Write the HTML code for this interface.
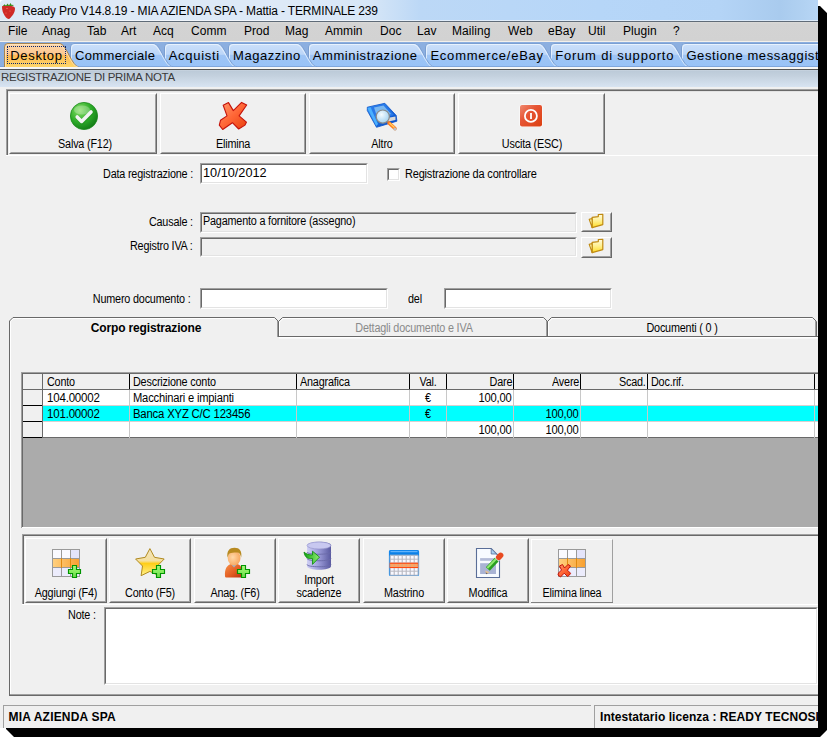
<!DOCTYPE html>
<html><head><meta charset="utf-8">
<style>
*{box-sizing:border-box;margin:0;padding:0}
html,body{width:833px;height:743px;background:#fff;overflow:hidden;font-family:"Liberation Sans",sans-serif;font-size:11px;color:#000}
.a{position:absolute}
#win{position:absolute;left:0;top:0;width:818px;height:728px;background:#f0f0f0;overflow:hidden}
#shR{position:absolute;left:818px;top:6px;width:9px;height:731px;background:#000;border-radius:0 7px 7px 0}
#shB{position:absolute;left:6px;top:728px;width:821px;height:9px;background:#000;border-radius:0 0 7px 7px}
#title{left:0;top:0;width:818px;height:21px;background:linear-gradient(90deg,#dde9f7 0,#dde9f7 300px,#d6e6f7 370px,#bcd8f6 420px,#b6d6f8 600px,#b4d4f6 720px,#a9cbee 780px,#b2d2f2 805px,#b8d6f6 818px)}
#title .t{left:22px;top:4.85px;font-size:12px;line-height:12px;letter-spacing:-0.15px;white-space:nowrap;color:#000}
#tline{left:0;top:21px;width:818px;height:1px;background:#5f6b78}
#menu{left:0;top:22px;width:818px;height:19px;background:linear-gradient(180deg,#dcdad8 0,#d3d3d3 2px,#d2d2d2 19px)}
#menu span{position:absolute;top:3.4px;font-size:12px;line-height:12px;letter-spacing:0.05px}
#mline{left:0;top:41px;width:818px;height:1px;background:#f4f0ea}
#tabs{left:0;top:42px;width:818px;height:25px;background:#8cafe0}
.tt{position:absolute;font-size:13px;line-height:13px;white-space:nowrap}
#tw{left:0;top:67px;width:818px;height:2px;background:#f6f6f6}
#hdrline{left:0;top:69px;width:818px;height:1px;background:#555}
#hdr{left:0;top:70px;width:818px;height:17px;background:linear-gradient(180deg,#c8d4e0 0px,#bdcbd9 1.5px,#c4d1de 6px,#d8e4f2 17px)}
#hdr .t{left:1px;top:2.27px;font-size:11.5px;line-height:11.5px;color:#3a3a3a;white-space:nowrap;letter-spacing:-0.3px}
.lbl{position:absolute;white-space:nowrap;font-size:11px;letter-spacing:-0.3px;line-height:13px}
.r{text-align:right}
.c{text-align:center}
.inp{position:absolute;background:#fff;border-top:1px solid #a0a0a0;border-left:1px solid #a0a0a0;border-right:1px solid #fff;border-bottom:1px solid #fff}
.inp:before{content:"";position:absolute;left:0;top:0;right:0;bottom:0;border-top:1px solid #696969;border-left:1px solid #696969;border-right:1px solid #e3e3e3;border-bottom:1px solid #e3e3e3}
.dis{background:#f0f0f0}
.btn{position:absolute;background:#f0f0f0;border-top:1px solid #fff;border-left:1px solid #fff;border-right:1px solid #696969;border-bottom:1px solid #696969}
.btn:before{content:"";position:absolute;left:0;top:0;right:0;bottom:0;border-top:1px solid #f0f0f0;border-left:1px solid #f0f0f0;border-right:1px solid #a0a0a0;border-bottom:1px solid #a0a0a0}
.btn .lbl{left:0;right:0;text-align:center}
</style></head><body>
<div id="win">
  <div class="a" id="title">
    <svg class="a" style="left:0;top:0" width="18" height="21" viewBox="0 0 18 21">
      <path d="M0,0 H4 A4,4 0 0 0 0,4 Z" fill="#fff"/>
      <path d="M2,6.5 C2,5.5 4,5.6 8,5.8 C12,5.6 15,6.5 15,8.5 C15,12.5 12,17 8.5,19 C7,19 5,16.5 3.5,13.5 C2.3,11 2,8.5 2,6.5 Z" fill="#d02a28"/>
      <path d="M8.5,19 C12,17 15,12.5 15,8.5 C14.5,13 12,16.5 9,18 Z" fill="#a81818"/>
      <path d="M3,6 L4.5,4.2 L6,5.8 L7.5,3.5 L9,5.5 L10.5,3 L12,5.5 L13,4.5 L13.5,6 Z" fill="#3c8a1a"/>
      <circle cx="7" cy="8.5" r="0.6" fill="#f0a080"/><circle cx="10" cy="11" r="0.5" fill="#f08070"/><circle cx="6" cy="13" r="0.5" fill="#f08070"/>
    </svg>
    <div class="a t">Ready Pro V14.8.19 - MIA AZIENDA SPA - Mattia - TERMINALE 239</div>
  </div>
  <div class="a" style="left:0;top:20px;width:818px;height:1px;background:rgba(255,255,255,0.55)"></div>
  <div class="a" id="tline"></div>
  <div class="a" id="menu">
    <span style="left:8px">File</span><span style="left:42px">Anag</span><span style="left:87px">Tab</span><span style="left:121px">Art</span><span style="left:153px">Acq</span><span style="left:191px">Comm</span><span style="left:244px">Prod</span><span style="left:285px">Mag</span><span style="left:325px">Ammin</span><span style="left:380px">Doc</span><span style="left:417px">Lav</span><span style="left:452px">Mailing</span><span style="left:508px">Web</span><span style="left:548px">eBay</span><span style="left:588px">Util</span><span style="left:623px">Plugin</span><span style="left:673px">?</span>
  </div>
  <div class="a" id="mline"></div>
  <div class="a" id="tabs">
<svg class="a" style="left:0;top:0" width="818" height="25" viewBox="0 0 818 25">
<defs><linearGradient id="gi" x1="0" y1="0" x2="0" y2="1"><stop offset="0" stop-color="#cce0fa"/><stop offset="0.46" stop-color="#bcd6f8"/><stop offset="0.5" stop-color="#9fc5f5"/><stop offset="1" stop-color="#98c2f7"/></linearGradient>
<linearGradient id="ga" x1="0" y1="0" x2="0" y2="1"><stop offset="0" stop-color="#fdd9aa"/><stop offset="0.46" stop-color="#fcc690"/><stop offset="0.5" stop-color="#ffbb55"/><stop offset="1" stop-color="#ffd66a"/></linearGradient></defs>
<path d="M681.5,25 L681.5,5 Q681.5,1.5 685,1.5 L890,1.5 C896,1.5 902,25 909,25 Z" fill="url(#gi)" stroke="none"/>
<path d="M681.5,25 L681.5,5 Q681.5,1.5 685,1.5 L890,1.5 C896,1.5 902,25 909,25" fill="none" stroke="#7b9fd2" stroke-width="1"/>
<path d="M682.5,25 L682.5,6 Q682.5,2.5 686,2.5 L889,2.5 C895,2.5 901,25 908,25" fill="none" stroke="#f4f9ff" stroke-width="1" opacity="0.7"/>
<path d="M550.5,25 L550.5,5 Q550.5,1.5 554,1.5 L671,1.5 C677,1.5 683,25 690,25 Z" fill="url(#gi)" stroke="none"/>
<path d="M550.5,25 L550.5,5 Q550.5,1.5 554,1.5 L671,1.5 C677,1.5 683,25 690,25" fill="none" stroke="#7b9fd2" stroke-width="1"/>
<path d="M551.5,25 L551.5,6 Q551.5,2.5 555,2.5 L670,2.5 C676,2.5 682,25 689,25" fill="none" stroke="#f4f9ff" stroke-width="1" opacity="0.7"/>
<path d="M425.5,25 L425.5,5 Q425.5,1.5 429,1.5 L540,1.5 C546,1.5 552,25 559,25 Z" fill="url(#gi)" stroke="none"/>
<path d="M425.5,25 L425.5,5 Q425.5,1.5 429,1.5 L540,1.5 C546,1.5 552,25 559,25" fill="none" stroke="#7b9fd2" stroke-width="1"/>
<path d="M426.5,25 L426.5,6 Q426.5,2.5 430,2.5 L539,2.5 C545,2.5 551,25 558,25" fill="none" stroke="#f4f9ff" stroke-width="1" opacity="0.7"/>
<path d="M308.5,25 L308.5,5 Q308.5,1.5 312,1.5 L415,1.5 C421,1.5 427,25 434,25 Z" fill="url(#gi)" stroke="none"/>
<path d="M308.5,25 L308.5,5 Q308.5,1.5 312,1.5 L415,1.5 C421,1.5 427,25 434,25" fill="none" stroke="#7b9fd2" stroke-width="1"/>
<path d="M309.5,25 L309.5,6 Q309.5,2.5 313,2.5 L414,2.5 C420,2.5 426,25 433,25" fill="none" stroke="#f4f9ff" stroke-width="1" opacity="0.7"/>
<path d="M228.5,25 L228.5,5 Q228.5,1.5 232,1.5 L298,1.5 C304,1.5 310,25 317,25 Z" fill="url(#gi)" stroke="none"/>
<path d="M228.5,25 L228.5,5 Q228.5,1.5 232,1.5 L298,1.5 C304,1.5 310,25 317,25" fill="none" stroke="#7b9fd2" stroke-width="1"/>
<path d="M229.5,25 L229.5,6 Q229.5,2.5 233,2.5 L297,2.5 C303,2.5 309,25 316,25" fill="none" stroke="#f4f9ff" stroke-width="1" opacity="0.7"/>
<path d="M164.5,25 L164.5,5 Q164.5,1.5 168,1.5 L218,1.5 C224,1.5 230,25 237,25 Z" fill="url(#gi)" stroke="none"/>
<path d="M164.5,25 L164.5,5 Q164.5,1.5 168,1.5 L218,1.5 C224,1.5 230,25 237,25" fill="none" stroke="#7b9fd2" stroke-width="1"/>
<path d="M165.5,25 L165.5,6 Q165.5,2.5 169,2.5 L217,2.5 C223,2.5 229,25 236,25" fill="none" stroke="#f4f9ff" stroke-width="1" opacity="0.7"/>
<path d="M70.5,25 L70.5,5 Q70.5,1.5 74,1.5 L154,1.5 C160,1.5 166,25 173,25 Z" fill="url(#gi)" stroke="none"/>
<path d="M70.5,25 L70.5,5 Q70.5,1.5 74,1.5 L154,1.5 C160,1.5 166,25 173,25" fill="none" stroke="#7b9fd2" stroke-width="1"/>
<path d="M71.5,25 L71.5,6 Q71.5,2.5 75,2.5 L153,2.5 C159,2.5 165,25 172,25" fill="none" stroke="#f4f9ff" stroke-width="1" opacity="0.7"/>
<path d="M4.5,25 L4.5,5 Q4.5,1.5 8,1.5 L60,1.5 C66,1.5 72,25 79,25 Z" fill="url(#ga)" stroke="none"/>
<path d="M4.5,25 L4.5,5 Q4.5,1.5 8,1.5 L60,1.5 C66,1.5 72,25 79,25" fill="none" stroke="#a8844e" stroke-width="1"/>
<path d="M5.5,25 L5.5,6 Q5.5,2.5 9,2.5 L59,2.5 C65,2.5 71,25 78,25" fill="none" stroke="#ffe8c8" stroke-width="1" opacity="0.7"/>

<rect x="0" y="24" width="4" height="1" fill="#7aa0d6"/><rect x="78" y="24" width="740" height="1" fill="#7aa0d6" opacity="0.8"/>
</svg>
<div style="position:absolute;left:7px;top:4px;width:59px;height:18px;border:1px dotted #0a2470"></div>
<div class="tt" style="left:10.2px;top:7.00px;letter-spacing:0.69px">Desktop</div>
<div class="tt" style="left:75.0px;top:7.00px;letter-spacing:0.35px">Commerciale</div>
<div class="tt" style="left:168.7px;top:7.00px;letter-spacing:0.71px">Acquisti</div>
<div class="tt" style="left:233.1px;top:7.00px;letter-spacing:0.52px">Magazzino</div>
<div class="tt" style="left:312.8px;top:7.00px;letter-spacing:0.58px">Amministrazione</div>
<div class="tt" style="left:430.4px;top:7.00px;letter-spacing:0.78px">Ecommerce/eBay</div>
<div class="tt" style="left:555.2px;top:7.00px;letter-spacing:0.8px">Forum di supporto</div>
<div class="tt" style="left:686.4px;top:7.00px;letter-spacing:0.6px">Gestione messaggisti</div>
  </div>
  <div class="a" id="tw"></div>
  <div class="a" id="hdrline"></div>
  <div class="a" id="hdr"><div class="a t">REGISTRAZIONE DI PRIMA NOTA</div></div>
  <!--BODY-->
<div style="position:absolute;left:6px;top:89px;width:812px;height:1px;background:#a0a0a0;"></div>
<div style="position:absolute;left:6px;top:90px;width:812px;height:1px;background:#696969;"></div>
<div style="position:absolute;left:6px;top:89px;width:1px;height:66px;background:#a0a0a0;"></div>
<div style="position:absolute;left:7px;top:90px;width:1px;height:65px;background:#696969;"></div>
<div style="position:absolute;left:8px;top:91px;width:810px;height:1px;background:#e3e3e3;"></div>
<div style="position:absolute;left:6px;top:155px;width:812px;height:1px;background:#fff;"></div>
<div style="position:absolute;left:9px;top:93px;width:148px;height:61px;background:#f0f0f0;border-style:solid;border-width:1px;border-color:#fff #696969 #696969 #fff"><div style="position:absolute;left:0;top:0;right:0;bottom:0;border-style:solid;border-width:1px;border-color:#f0f0f0 #a0a0a0 #a0a0a0 #f0f0f0"></div></div>
<div style="position:absolute;left:160px;top:93px;width:146px;height:61px;background:#f0f0f0;border-style:solid;border-width:1px;border-color:#fff #696969 #696969 #fff"><div style="position:absolute;left:0;top:0;right:0;bottom:0;border-style:solid;border-width:1px;border-color:#f0f0f0 #a0a0a0 #a0a0a0 #f0f0f0"></div></div>
<div style="position:absolute;left:309px;top:93px;width:146px;height:61px;background:#f0f0f0;border-style:solid;border-width:1px;border-color:#fff #696969 #696969 #fff"><div style="position:absolute;left:0;top:0;right:0;bottom:0;border-style:solid;border-width:1px;border-color:#f0f0f0 #a0a0a0 #a0a0a0 #f0f0f0"></div></div>
<div style="position:absolute;left:458px;top:93px;width:147px;height:61px;background:#f0f0f0;border-style:solid;border-width:1px;border-color:#fff #696969 #696969 #fff"><div style="position:absolute;left:0;top:0;right:0;bottom:0;border-style:solid;border-width:1px;border-color:#f0f0f0 #a0a0a0 #a0a0a0 #f0f0f0"></div></div>
<div style="position:absolute;top:137.84px;font-size:12px;line-height:12px;letter-spacing:-0.2px;white-space:nowrap;left:-15.299999999999997px;width:200px;text-align:center;transform-origin:50% 0;transform:scaleX(0.9);">Salva (F12)</div>
<div style="position:absolute;top:137.84px;font-size:12px;line-height:12px;letter-spacing:-0.2px;white-space:nowrap;left:133px;width:200px;text-align:center;transform-origin:50% 0;transform:scaleX(0.9);">Elimina</div>
<div style="position:absolute;top:137.84px;font-size:12px;line-height:12px;letter-spacing:-0.2px;white-space:nowrap;left:282px;width:200px;text-align:center;transform-origin:50% 0;transform:scaleX(0.9);">Altro</div>
<div style="position:absolute;top:137.84px;font-size:12px;line-height:12px;letter-spacing:-0.2px;white-space:nowrap;left:431.9px;width:200px;text-align:center;transform-origin:50% 0;transform:scaleX(0.9);">Uscita (ESC)</div>
<svg width="0" height="0" style="position:absolute"><defs>
<radialGradient id="gchk" cx="0.35" cy="0.3" r="0.75"><stop offset="0" stop-color="#8be06a"/><stop offset="0.55" stop-color="#2fae2a"/><stop offset="1" stop-color="#127a16"/></radialGradient>
<linearGradient id="gx" x1="0" y1="0" x2="1" y2="1"><stop offset="0" stop-color="#ff9a70"/><stop offset="0.5" stop-color="#ff6636"/><stop offset="1" stop-color="#e8400e"/></linearGradient>
<linearGradient id="gpow" x1="0" y1="0" x2="1" y2="1"><stop offset="0" stop-color="#f08a70"/><stop offset="0.4" stop-color="#e65535"/><stop offset="1" stop-color="#dc4010"/></linearGradient>
<linearGradient id="gplus" x1="0" y1="0" x2="0" y2="1"><stop offset="0" stop-color="#a8f880"/><stop offset="0.5" stop-color="#88ee60"/><stop offset="1" stop-color="#6ad848"/></linearGradient>
<linearGradient id="gstar" x1="0" y1="0" x2="0" y2="1"><stop offset="0" stop-color="#f2e4bc"/><stop offset="0.45" stop-color="#f5e0a0"/><stop offset="0.55" stop-color="#ffce18"/><stop offset="1" stop-color="#fff290"/></linearGradient>
<linearGradient id="gdb" x1="0" y1="0" x2="1" y2="0"><stop offset="0" stop-color="#d0d0f4"/><stop offset="0.45" stop-color="#a0a0dc"/><stop offset="1" stop-color="#5a5aa0"/></linearGradient>
<linearGradient id="garr" x1="0" y1="0" x2="1" y2="0"><stop offset="0" stop-color="#10a010"/><stop offset="1" stop-color="#90f070"/></linearGradient>
<linearGradient id="gor" x1="0" y1="0" x2="1" y2="0"><stop offset="0" stop-color="#ffd080"/><stop offset="1" stop-color="#f8a030"/></linearGradient>
<linearGradient id="gfold" x1="0" y1="0" x2="0" y2="1"><stop offset="0" stop-color="#fffbe0"/><stop offset="0.5" stop-color="#fff090"/><stop offset="1" stop-color="#ffdc20"/></linearGradient>
<linearGradient id="gbody" x1="0" y1="0" x2="1" y2="1"><stop offset="0" stop-color="#f89048"/><stop offset="0.6" stop-color="#e05a20"/><stop offset="1" stop-color="#b83010"/></linearGradient><radialGradient id="gface" cx="0.4" cy="0.45" r="0.6"><stop offset="0" stop-color="#ffd8a8"/><stop offset="1" stop-color="#f8a860"/></radialGradient>
<linearGradient id="gbook" x1="0" y1="0" x2="1" y2="1"><stop offset="0" stop-color="#3aa0ff"/><stop offset="1" stop-color="#0040c0"/></linearGradient>
<radialGradient id="glens" cx="0.4" cy="0.35" r="0.7"><stop offset="0" stop-color="#f4fbff"/><stop offset="1" stop-color="#9ed0f0"/></radialGradient>
</defs></svg>
<svg style="position:absolute;left:70px;top:101.8px" width="28" height="28" viewBox="0 0 28 28"><circle cx="14" cy="14" r="13.6" fill="url(#gchk)" stroke="#1b8a1b" stroke-width="0.8"/><ellipse cx="12" cy="8" rx="8" ry="4.5" fill="#fff" opacity="0.25"/><path d="M7.2,15 L11.6,19.4 L21,10" fill="none" stroke="#1a7a1a" stroke-width="4.6" stroke-linecap="round" stroke-linejoin="round" opacity="0.35" transform="translate(0.4,0.6)"/><path d="M7.2,15 L11.6,19.4 L21,10" fill="none" stroke="#f4f4f4" stroke-width="3.6" stroke-linecap="round" stroke-linejoin="round"/></svg>
<svg style="position:absolute;left:213px;top:98px" width="40" height="36" viewBox="0 0 40 36"><polygon points="10.2,7.3 15.5,4.6 20.3,12.6 28.6,4.4 33.7,7 26.1,17.9 33.4,24.2 32,27.1 25.7,31 19.4,24.7 9.7,31.5 6.3,27.1 7.5,22.3 14,17.9" fill="url(#gx)" stroke="#c4120a" stroke-width="1.1" stroke-linejoin="round"/></svg>
<svg style="position:absolute;left:362px;top:98px" width="40" height="36" viewBox="0 0 40 36"><polygon points="5.3,9.2 22.8,5.3 34.2,17.4 34.9,23.2 14.5,29.3 5.3,12.6" fill="url(#gbook)" stroke="#0a50c8" stroke-width="0.8"/><polygon points="9,9 22,6.2 32,17 14,22.5" fill="#2a78e8"/><polygon points="12,9.5 21.5,7.5 29,16 15.5,20" fill="#7ab8f0"/><polygon points="5.5,10 8.5,9.5 16,26 14.2,28" fill="#4ab0ff"/><polygon points="25,20 33.5,18.5 33.5,22 24,24" fill="#d8d8d8"/><line x1="27" y1="25" x2="33" y2="30.5" stroke="#ff7a20" stroke-width="3.6" stroke-linecap="round"/><line x1="27.5" y1="25" x2="32.5" y2="29.5" stroke="#ffd060" stroke-width="1.4"/><circle cx="33" cy="31" r="1.6" fill="#c0c0c0"/><circle cx="20.8" cy="18.6" r="6.6" fill="url(#glens)" stroke="#8a8a8a" stroke-width="1.2"/></svg>
<svg style="position:absolute;left:511px;top:98px" width="40" height="36" viewBox="0 0 40 36"><rect x="8.5" y="6.5" width="23" height="22.5" rx="2.5" fill="#fff" opacity="0.9"/><rect x="9" y="7" width="22" height="21.6" rx="2" fill="url(#gpow)"/><circle cx="19.9" cy="17.9" r="6" fill="none" stroke="#fff" stroke-width="1.8"/><rect x="19.1" y="15" width="1.8" height="6" fill="#fff"/></svg>
<div style="position:absolute;top:167.84px;font-size:12px;line-height:12px;letter-spacing:-0.2px;white-space:nowrap;right:625px;transform-origin:100% 0;transform:scaleX(0.9);">Data registrazione :</div>
<div style="position:absolute;left:200px;top:163px;width:168px;height:21px;background:#fff;border-style:solid;border-width:1px;border-color:#a0a0a0 #fff #fff #a0a0a0"><div style="position:absolute;left:0;top:0;right:0;bottom:0;border-style:solid;border-width:1px;border-color:#696969 #e3e3e3 #e3e3e3 #696969"></div></div>
<div style="position:absolute;top:166.84px;font-size:12px;line-height:12px;letter-spacing:0px;white-space:nowrap;left:203px;transform-origin:0 0;transform:scaleX(1.06);">10/10/2012</div>
<div style="position:absolute;left:387px;top:168px;width:13px;height:13px;background:#fff;border-style:solid;border-width:1px;border-color:#a0a0a0 #fff #fff #a0a0a0"><div style="position:absolute;left:0;top:0;right:0;bottom:0;border-style:solid;border-width:1px;border-color:#696969 #e3e3e3 #e3e3e3 #696969"></div></div>
<div style="position:absolute;top:167.84px;font-size:12px;line-height:12px;letter-spacing:-0.2px;white-space:nowrap;left:405px;transform-origin:0 0;transform:scaleX(0.915);">Registrazione da controllare</div>
<div style="position:absolute;top:215.84px;font-size:12px;line-height:12px;letter-spacing:-0.2px;white-space:nowrap;right:625px;transform-origin:100% 0;transform:scaleX(0.9);">Causale :</div>
<div style="position:absolute;left:200px;top:212px;width:377px;height:21px;background:#f0f0f0;border-style:solid;border-width:1px;border-color:#a0a0a0 #fff #fff #a0a0a0"><div style="position:absolute;left:0;top:0;right:0;bottom:0;border-style:solid;border-width:1px;border-color:#696969 #e3e3e3 #e3e3e3 #696969"></div></div>
<div style="position:absolute;top:214.84px;font-size:12px;line-height:12px;letter-spacing:-0.2px;white-space:nowrap;left:203px;transform-origin:0 0;transform:scaleX(0.9);">Pagamento a fornitore (assegno)</div>
<div style="position:absolute;left:581px;top:212px;width:31px;height:20px;background:#f0f0f0;border-style:solid;border-width:1px;border-color:#fff #696969 #696969 #fff"><div style="position:absolute;left:0;top:0;right:0;bottom:0;border-style:solid;border-width:1px;border-color:#f0f0f0 #a0a0a0 #a0a0a0 #f0f0f0"></div></div>
<div style="position:absolute;top:239.84px;font-size:12px;line-height:12px;letter-spacing:-0.2px;white-space:nowrap;right:625px;transform-origin:100% 0;transform:scaleX(0.9);">Registro IVA :</div>
<div style="position:absolute;left:200px;top:237px;width:377px;height:20px;background:#f0f0f0;border-style:solid;border-width:1px;border-color:#a0a0a0 #fff #fff #a0a0a0"><div style="position:absolute;left:0;top:0;right:0;bottom:0;border-style:solid;border-width:1px;border-color:#696969 #e3e3e3 #e3e3e3 #696969"></div></div>
<div style="position:absolute;left:581px;top:237px;width:31px;height:21px;background:#f0f0f0;border-style:solid;border-width:1px;border-color:#fff #696969 #696969 #fff"><div style="position:absolute;left:0;top:0;right:0;bottom:0;border-style:solid;border-width:1px;border-color:#f0f0f0 #a0a0a0 #a0a0a0 #f0f0f0"></div></div>
<svg style="position:absolute;left:585px;top:211px" width="24" height="22" viewBox="0 0 24 22"><path d="M7.1,16.6 L7.1,6.4 L13.3,5.6 L13.3,3.5 L17.8,3.3 L17.8,13.6 Z" fill="url(#gfold)" stroke="#c08a10" stroke-width="1.2" stroke-linejoin="round"/><path d="M4.2,8.3 L7.1,7.6 L7.1,16.6 Z" fill="#fff6b0" stroke="#c08a10" stroke-width="1.1" stroke-linejoin="round"/></svg>
<svg style="position:absolute;left:585px;top:236px" width="24" height="22" viewBox="0 0 24 22"><path d="M7.1,16.6 L7.1,6.4 L13.3,5.6 L13.3,3.5 L17.8,3.3 L17.8,13.6 Z" fill="url(#gfold)" stroke="#c08a10" stroke-width="1.2" stroke-linejoin="round"/><path d="M4.2,8.3 L7.1,7.6 L7.1,16.6 Z" fill="#fff6b0" stroke="#c08a10" stroke-width="1.1" stroke-linejoin="round"/></svg>
<div style="position:absolute;top:292.84px;font-size:12px;line-height:12px;letter-spacing:-0.2px;white-space:nowrap;right:628px;transform-origin:100% 0;transform:scaleX(0.9);">Numero documento :</div>
<div style="position:absolute;left:200px;top:288px;width:188px;height:21px;background:#fff;border-style:solid;border-width:1px;border-color:#a0a0a0 #fff #fff #a0a0a0"><div style="position:absolute;left:0;top:0;right:0;bottom:0;border-style:solid;border-width:1px;border-color:#696969 #e3e3e3 #e3e3e3 #696969"></div></div>
<div style="position:absolute;top:292.84px;font-size:12px;line-height:12px;letter-spacing:-0.2px;white-space:nowrap;left:408px;transform-origin:0 0;transform:scaleX(0.9);">del</div>
<div style="position:absolute;left:444px;top:288px;width:168px;height:21px;background:#fff;border-style:solid;border-width:1px;border-color:#a0a0a0 #fff #fff #a0a0a0"><div style="position:absolute;left:0;top:0;right:0;bottom:0;border-style:solid;border-width:1px;border-color:#696969 #e3e3e3 #e3e3e3 #696969"></div></div>
<svg style="position:absolute;left:0;top:300px" width="818" height="400" viewBox="0 300 818 400"><path d="M9.5,696 L9.5,321 L13,317.5 L274.5,317.5 L278.5,321.5 L278.5,336" fill="none" stroke="#696969"/><path d="M10.5,695 L10.5,321.5 L13.5,318.5 L274,318.5" fill="none" stroke="#fff"/><path d="M277.5,321 L277.5,337" fill="none" stroke="#a0a0a0"/><path d="M278.5,336.5 L278.5,321.5 L282.5,317.5 L543.5,317.5 L547.5,321.5 L547.5,336.5" fill="none" stroke="#696969"/><path d="M279.5,336 L279.5,322 L283,318.5 L543,318.5" fill="none" stroke="#fff"/><path d="M546.5,321 L546.5,336" fill="none" stroke="#a0a0a0"/><path d="M547.5,336.5 L547.5,321.5 L551.5,317.5 L812.5,317.5 L816.5,321.5 L816.5,336.5" fill="none" stroke="#696969"/><path d="M548.5,336 L548.5,322 L552,318.5 L812,318.5" fill="none" stroke="#fff"/><path d="M815.5,321 L815.5,336" fill="none" stroke="#a0a0a0"/><path d="M278,336.5 L818,336.5" stroke="#696969"/><path d="M279,337.5 L818,337.5" stroke="#fff"/><path d="M279,338.5 L818,338.5" stroke="#f8f8f8"/><path d="M10,694.5 L818,694.5" stroke="#a0a0a0"/><path d="M9,695.5 L818,695.5" stroke="#696969"/></svg>
<div style="position:absolute;top:321.84px;font-size:12px;line-height:12px;letter-spacing:-0.15px;white-space:nowrap;font-weight:bold;left:46px;width:200px;text-align:center;transform-origin:50% 0;">Corpo registrazione</div>
<div style="position:absolute;top:321.84px;font-size:12px;line-height:12px;letter-spacing:-0.2px;white-space:nowrap;color:#8a8a8a;left:314px;width:200px;text-align:center;transform-origin:50% 0;transform:scaleX(0.9);">Dettagli documento e IVA</div>
<div style="position:absolute;top:321.84px;font-size:12px;line-height:12px;letter-spacing:-0.2px;white-space:nowrap;left:582px;width:200px;text-align:center;transform-origin:50% 0;transform:scaleX(0.9);">Documenti ( 0 )</div>
<div style="position:absolute;left:21px;top:372px;width:797px;height:1px;background:#a0a0a0;"></div>
<div style="position:absolute;left:22px;top:373px;width:796px;height:1px;background:#696969;"></div>
<div style="position:absolute;left:21px;top:372px;width:1px;height:156px;background:#a0a0a0;"></div>
<div style="position:absolute;left:22px;top:373px;width:1px;height:155px;background:#696969;"></div>
<div style="position:absolute;left:23px;top:374px;width:795px;height:16px;background:#f0f0f0;"></div>
<div style="position:absolute;left:23px;top:390px;width:19px;height:48px;background:#f0f0f0;"></div>
<div style="position:absolute;left:43px;top:390px;width:775px;height:48px;background:#fff;"></div>
<div style="position:absolute;left:43px;top:406px;width:775px;height:15px;background:#00ffff;"></div>
<div style="position:absolute;left:23px;top:438px;width:795px;height:89px;background:#ababab;"></div>
<div style="position:absolute;left:23px;top:389px;width:795px;height:1px;background:#696969;"></div>
<div style="position:absolute;left:43px;top:405px;width:775px;height:1px;background:#d8d0d0;"></div>
<div style="position:absolute;left:43px;top:421px;width:775px;height:1px;background:#d8d0d0;"></div>
<div style="position:absolute;left:43px;top:437px;width:775px;height:1px;background:#696969;"></div>
<div style="position:absolute;left:23px;top:405px;width:19px;height:1px;background:#000;"></div>
<div style="position:absolute;left:23px;top:421px;width:19px;height:1px;background:#000;"></div>
<div style="position:absolute;left:23px;top:437px;width:19px;height:1px;background:#000;"></div>
<div style="position:absolute;left:42px;top:374px;width:1px;height:64px;background:#696969;"></div>
<div style="position:absolute;left:129px;top:374px;width:1px;height:15px;background:#000;"></div>
<div style="position:absolute;left:129px;top:390px;width:1px;height:48px;background:#c8c8c8;"></div>
<div style="position:absolute;left:296px;top:374px;width:1px;height:15px;background:#000;"></div>
<div style="position:absolute;left:296px;top:390px;width:1px;height:48px;background:#c8c8c8;"></div>
<div style="position:absolute;left:409px;top:374px;width:1px;height:15px;background:#000;"></div>
<div style="position:absolute;left:409px;top:390px;width:1px;height:48px;background:#c8c8c8;"></div>
<div style="position:absolute;left:446px;top:374px;width:1px;height:15px;background:#000;"></div>
<div style="position:absolute;left:446px;top:390px;width:1px;height:48px;background:#c8c8c8;"></div>
<div style="position:absolute;left:513px;top:374px;width:1px;height:15px;background:#000;"></div>
<div style="position:absolute;left:513px;top:390px;width:1px;height:48px;background:#c8c8c8;"></div>
<div style="position:absolute;left:580px;top:374px;width:1px;height:15px;background:#000;"></div>
<div style="position:absolute;left:580px;top:390px;width:1px;height:48px;background:#c8c8c8;"></div>
<div style="position:absolute;left:647px;top:374px;width:1px;height:15px;background:#000;"></div>
<div style="position:absolute;left:647px;top:390px;width:1px;height:48px;background:#c8c8c8;"></div>
<div style="position:absolute;left:814px;top:374px;width:1px;height:15px;background:#000;"></div>
<div style="position:absolute;left:814px;top:390px;width:1px;height:48px;background:#c8c8c8;"></div>
<div style="position:absolute;top:375.84px;font-size:12px;line-height:12px;letter-spacing:-0.2px;white-space:nowrap;left:47px;transform-origin:0 0;transform:scaleX(0.9);">Conto</div>
<div style="position:absolute;top:375.84px;font-size:12px;line-height:12px;letter-spacing:-0.2px;white-space:nowrap;left:133px;transform-origin:0 0;transform:scaleX(0.9);">Descrizione conto</div>
<div style="position:absolute;top:375.84px;font-size:12px;line-height:12px;letter-spacing:-0.2px;white-space:nowrap;left:300px;transform-origin:0 0;transform:scaleX(0.9);">Anagrafica</div>
<div style="position:absolute;top:375.84px;font-size:12px;line-height:12px;letter-spacing:-0.2px;white-space:nowrap;left:328px;width:200px;text-align:center;transform-origin:50% 0;transform:scaleX(0.9);">Val.</div>
<div style="position:absolute;top:375.84px;font-size:12px;line-height:12px;letter-spacing:-0.2px;white-space:nowrap;right:306px;transform-origin:100% 0;transform:scaleX(0.9);">Dare</div>
<div style="position:absolute;top:375.84px;font-size:12px;line-height:12px;letter-spacing:-0.2px;white-space:nowrap;right:239px;transform-origin:100% 0;transform:scaleX(0.9);">Avere</div>
<div style="position:absolute;top:375.84px;font-size:12px;line-height:12px;letter-spacing:-0.2px;white-space:nowrap;right:172px;transform-origin:100% 0;transform:scaleX(0.9);">Scad.</div>
<div style="position:absolute;top:375.84px;font-size:12px;line-height:12px;letter-spacing:-0.2px;white-space:nowrap;left:651px;transform-origin:0 0;transform:scaleX(0.9);">Doc.rif.</div>
<div style="position:absolute;top:391.84px;font-size:12px;line-height:12px;letter-spacing:-0.2px;white-space:nowrap;left:47px;transform-origin:0 0;transform:scaleX(0.96);">104.00002</div>
<div style="position:absolute;top:391.84px;font-size:12px;line-height:12px;letter-spacing:-0.2px;white-space:nowrap;left:133px;transform-origin:0 0;transform:scaleX(0.93);">Macchinari e impianti</div>
<div style="position:absolute;top:391.84px;font-size:12px;line-height:12px;letter-spacing:-0.2px;white-space:nowrap;left:328px;width:200px;text-align:center;transform-origin:50% 0;transform:scaleX(0.9);">&euro;</div>
<div style="position:absolute;top:391.84px;font-size:12px;line-height:12px;letter-spacing:-0.2px;white-space:nowrap;right:306px;transform-origin:100% 0;transform:scaleX(0.93);">100,00</div>
<div style="position:absolute;top:407.84px;font-size:12px;line-height:12px;letter-spacing:-0.2px;white-space:nowrap;left:47px;transform-origin:0 0;transform:scaleX(0.96);">101.00002</div>
<div style="position:absolute;top:407.84px;font-size:12px;line-height:12px;letter-spacing:-0.2px;white-space:nowrap;left:133px;transform-origin:0 0;transform:scaleX(0.945);">Banca XYZ C/C 123456</div>
<div style="position:absolute;top:407.84px;font-size:12px;line-height:12px;letter-spacing:-0.2px;white-space:nowrap;left:328px;width:200px;text-align:center;transform-origin:50% 0;transform:scaleX(0.9);">&euro;</div>
<div style="position:absolute;top:407.84px;font-size:12px;line-height:12px;letter-spacing:-0.2px;white-space:nowrap;right:239px;transform-origin:100% 0;transform:scaleX(0.93);">100,00</div>
<div style="position:absolute;top:423.84px;font-size:12px;line-height:12px;letter-spacing:-0.2px;white-space:nowrap;right:306px;transform-origin:100% 0;transform:scaleX(0.93);">100,00</div>
<div style="position:absolute;top:423.84px;font-size:12px;line-height:12px;letter-spacing:-0.2px;white-space:nowrap;right:239px;transform-origin:100% 0;transform:scaleX(0.93);">100,00</div>
<div style="position:absolute;left:22px;top:527px;width:796px;height:1px;background:#fff;"></div>
<div style="position:absolute;left:22px;top:534px;width:796px;height:1px;background:#a0a0a0;"></div>
<div style="position:absolute;left:23px;top:535px;width:795px;height:1px;background:#696969;"></div>
<div style="position:absolute;left:22px;top:534px;width:1px;height:71px;background:#a0a0a0;"></div>
<div style="position:absolute;left:23px;top:535px;width:1px;height:70px;background:#696969;"></div>
<div style="position:absolute;left:22px;top:604px;width:796px;height:1px;background:#fff;"></div>
<div style="position:absolute;left:25px;top:538px;width:82px;height:65px;background:#f0f0f0;border-style:solid;border-width:1px;border-color:#fff #696969 #696969 #fff"><div style="position:absolute;left:0;top:0;right:0;bottom:0;border-style:solid;border-width:1px;border-color:#f0f0f0 #a0a0a0 #a0a0a0 #f0f0f0"></div></div>
<div style="position:absolute;top:586.84px;font-size:12px;line-height:12px;letter-spacing:-0.2px;white-space:nowrap;left:-34px;width:200px;text-align:center;transform-origin:50% 0;transform:scaleX(0.9);">Aggiungi (F4)</div>
<div style="position:absolute;left:109px;top:538px;width:82px;height:65px;background:#f0f0f0;border-style:solid;border-width:1px;border-color:#fff #696969 #696969 #fff"><div style="position:absolute;left:0;top:0;right:0;bottom:0;border-style:solid;border-width:1px;border-color:#f0f0f0 #a0a0a0 #a0a0a0 #f0f0f0"></div></div>
<div style="position:absolute;top:586.84px;font-size:12px;line-height:12px;letter-spacing:-0.2px;white-space:nowrap;left:50px;width:200px;text-align:center;transform-origin:50% 0;transform:scaleX(0.9);">Conto (F5)</div>
<div style="position:absolute;left:194px;top:538px;width:82px;height:65px;background:#f0f0f0;border-style:solid;border-width:1px;border-color:#fff #696969 #696969 #fff"><div style="position:absolute;left:0;top:0;right:0;bottom:0;border-style:solid;border-width:1px;border-color:#f0f0f0 #a0a0a0 #a0a0a0 #f0f0f0"></div></div>
<div style="position:absolute;top:586.84px;font-size:12px;line-height:12px;letter-spacing:-0.2px;white-space:nowrap;left:135px;width:200px;text-align:center;transform-origin:50% 0;transform:scaleX(0.9);">Anag. (F6)</div>
<div style="position:absolute;left:278px;top:538px;width:82px;height:65px;background:#f0f0f0;border-style:solid;border-width:1px;border-color:#fff #696969 #696969 #fff"><div style="position:absolute;left:0;top:0;right:0;bottom:0;border-style:solid;border-width:1px;border-color:#f0f0f0 #a0a0a0 #a0a0a0 #f0f0f0"></div></div>
<div style="position:absolute;left:363px;top:538px;width:82px;height:65px;background:#f0f0f0;border-style:solid;border-width:1px;border-color:#fff #696969 #696969 #fff"><div style="position:absolute;left:0;top:0;right:0;bottom:0;border-style:solid;border-width:1px;border-color:#f0f0f0 #a0a0a0 #a0a0a0 #f0f0f0"></div></div>
<div style="position:absolute;top:586.84px;font-size:12px;line-height:12px;letter-spacing:-0.2px;white-space:nowrap;left:304px;width:200px;text-align:center;transform-origin:50% 0;transform:scaleX(0.9);">Mastrino</div>
<div style="position:absolute;left:447px;top:538px;width:82px;height:65px;background:#f0f0f0;border-style:solid;border-width:1px;border-color:#fff #696969 #696969 #fff"><div style="position:absolute;left:0;top:0;right:0;bottom:0;border-style:solid;border-width:1px;border-color:#f0f0f0 #a0a0a0 #a0a0a0 #f0f0f0"></div></div>
<div style="position:absolute;top:586.84px;font-size:12px;line-height:12px;letter-spacing:-0.2px;white-space:nowrap;left:388px;width:200px;text-align:center;transform-origin:50% 0;transform:scaleX(0.9);">Modifica</div>
<div style="position:absolute;left:531px;top:539px;width:82px;height:64px;background:#f0f0f0;border-style:solid;border-width:1px;border-color:#fff #a0a0a0 #a0a0a0 #fff"><div style="position:absolute;left:0;top:0;right:0;bottom:0;border-style:solid;border-width:1px;border-color:#f0f0f0 #f0f0f0 #f0f0f0 #f0f0f0"></div></div>
<div style="position:absolute;left:531px;top:602px;width:82px;height:1px;background:#808080;"></div>
<div style="position:absolute;top:586.84px;font-size:12px;line-height:12px;letter-spacing:-0.2px;white-space:nowrap;left:472px;width:200px;text-align:center;transform-origin:50% 0;transform:scaleX(0.9);">Elimina linea</div>
<div style="position:absolute;top:573.84px;font-size:12px;line-height:12px;letter-spacing:-0.2px;white-space:nowrap;left:219px;width:200px;text-align:center;transform-origin:50% 0;transform:scaleX(0.9);">Import</div>
<div style="position:absolute;top:586.84px;font-size:12px;line-height:12px;letter-spacing:-0.2px;white-space:nowrap;left:219px;width:200px;text-align:center;transform-origin:50% 0;transform:scaleX(0.9);">scadenze</div>
<svg style="position:absolute;left:52px;top:549px" width="30" height="30" viewBox="0 0 30 30"><rect x="0.5" y="0.5" width="27" height="27" fill="#fff" stroke="#9a9a9a"/><rect x="1" y="1" width="26" height="8.5" fill="#fafaff"/><rect x="19" y="1" width="8" height="8.5" fill="#e4e4fa"/><rect x="1" y="9.5" width="26" height="9" fill="url(#gor)"/><rect x="1" y="18.5" width="26" height="8.5" fill="#ececfc"/><path d="M9.5,0 V28 M18.5,0 V28 M0,9.5 H28 M0,18.5 H28" stroke="#9a9a9a" stroke-width="1"/><path d="M9.5,9 V19 M18.5,9 V19" stroke="#e08a10" stroke-width="1"/><path d="M20.5,16.5 h4.0 v4.0 h4.0 v4.0 h-4.0 v4.0 h-4.0 v-4.0 h-4.0 v-4.0 h4.0 Z" fill="url(#gplus)" stroke="#009400" stroke-width="1.15" stroke-linejoin="miter"/></svg>
<svg style="position:absolute;left:130px;top:544px" width="40" height="40" viewBox="0 0 40 40"><polygon points="19.9,4.6 24.5,13.3 34.2,15.0 27.3,22.0 28.7,31.7 19.9,27.4 11.1,31.7 12.5,22.0 5.6,15.0 15.3,13.3" fill="url(#gstar)" stroke="#b08a20" stroke-width="1" stroke-linejoin="round"/><path d="M26.5,21.5 h4.0 v4.0 h4.0 v4.0 h-4.0 v4.0 h-4.0 v-4.0 h-4.0 v-4.0 h4.0 Z" fill="url(#gplus)" stroke="#009400" stroke-width="1.15" stroke-linejoin="miter"/></svg>
<svg style="position:absolute;left:215px;top:544px" width="40" height="40" viewBox="0 0 40 40"><path d="M10,32 C9.5,25 12,20.5 17,20 L22,20 C26.5,20.5 27.5,25 26.5,33.5 L12,33.5 C10.5,33.5 10,33 10,32 Z" fill="url(#gbody)"/><path d="M16,20.3 L19,23.5 L22,20.3 Z" fill="#9ab0c8"/><ellipse cx="19.1" cy="14" rx="6.4" ry="7.4" fill="url(#gface)"/><path d="M12.5,13.5 C11.5,7 14.5,3.8 19.5,3.8 C24.5,3.8 27.2,7 26.2,13.5 C25.5,11.5 25,9.5 23.5,8.8 C21,8.2 17,8.8 14.5,9.5 C13.5,10.5 13,12 12.5,13.5 Z" fill="#b88a20"/><path d="M26.5,21.5 h4.0 v4.0 h4.0 v4.0 h-4.0 v4.0 h-4.0 v-4.0 h-4.0 v-4.0 h4.0 Z" fill="url(#gplus)" stroke="#009400" stroke-width="1.15" stroke-linejoin="miter"/></svg>
<svg style="position:absolute;left:298px;top:538px" width="40" height="36" viewBox="0 0 40 36"><path d="M9,7.5 C9,2.5 33,2.5 33,7.5 L33,28 C33,33 9,33 9,28 Z" fill="url(#gdb)"/><ellipse cx="21" cy="7.5" rx="12" ry="3.5" fill="#c8c8f0" stroke="#9090c8" stroke-width="0.6"/><path d="M9,14 C9,17 33,17 33,14 M9,20.5 C9,23.5 33,23.5 33,20.5 M9,26.5 C9,29.5 33,29.5 33,26.5" fill="none" stroke="#6a6aa8" stroke-width="1" opacity="0.9"/><path d="M6,14 C7,20 10,21 14.5,20.5 L14.5,26.4 L21.5,19.1 L14.5,13.2 L14.5,17 C11,17 8,16 6,14 Z" fill="url(#garr)" stroke="#0a8a0a" stroke-width="0.8" stroke-linejoin="round"/></svg>
<svg style="position:absolute;left:384px;top:545px" width="40" height="36" viewBox="0 0 40 36"><rect x="5.5" y="5.5" width="29" height="25" rx="1" fill="#f8f8ff" stroke="#1a8cf0" stroke-width="1.2"/><rect x="5.5" y="5.5" width="29" height="5" fill="#0a80e8"/><rect x="6.5" y="6.2" width="27" height="1" fill="#7ac0ff"/><rect x="6" y="18.2" width="28" height="4.4" fill="#ffb070" stroke="#ff4a10" stroke-width="1"/><path d="M6.2,10.5 V30" stroke="#b0b0b8" stroke-width="1"/><path d="M10.2,10.5 V30" stroke="#b0b0b8" stroke-width="1"/><path d="M14.2,10.5 V30" stroke="#b0b0b8" stroke-width="1"/><path d="M18.2,10.5 V30" stroke="#b0b0b8" stroke-width="1"/><path d="M22.2,10.5 V30" stroke="#b0b0b8" stroke-width="1"/><path d="M26.2,10.5 V30" stroke="#b0b0b8" stroke-width="1"/><path d="M30.2,10.5 V30" stroke="#b0b0b8" stroke-width="1"/><path d="M34.2,10.5 V30" stroke="#b0b0b8" stroke-width="1"/><path d="M6,10.2 H34" stroke="#b8b8c0" stroke-width="1"/><path d="M6,14.2 H34" stroke="#b8b8c0" stroke-width="1"/><path d="M6,18.2 H34" stroke="#b8b8c0" stroke-width="1"/><path d="M6,22.2 H34" stroke="#b8b8c0" stroke-width="1"/><path d="M6,26.2 H34" stroke="#b8b8c0" stroke-width="1"/><path d="M6,30.2 H34" stroke="#b8b8c0" stroke-width="1"/><rect x="6" y="18.2" width="28" height="4.4" fill="#ff9a50" opacity="0.5"/><path d="M6,18.3 H34 M6,22.5 H34" stroke="#ff4a10" stroke-width="1"/></svg>
<svg style="position:absolute;left:468px;top:543px" width="40" height="40" viewBox="0 0 40 40"><path d="M8.5,5.5 L23.2,5.5 L28.5,10.8 L31.5,13.5 L31.5,34.5 L8.5,34.5 Z" fill="#f8fbff" stroke="#5a6e98" stroke-width="1.1"/><path d="M23.2,5.5 L23.2,11 L28.5,11 Z" fill="#a8d0f0" stroke="#5a6e98" stroke-width="0.8"/><rect x="12.1" y="15.1" width="15.9" height="2.7" fill="#b4bcd8"/><rect x="12.1" y="20.2" width="15.9" height="10.8" fill="#aab4d4"/><path d="M17.2,27.5 L18.2,31.2 L21.5,29.2 Z" fill="#e8c090"/><path d="M17.6,29.5 L18.2,31.2 L19.8,30.2 Z" fill="#606060"/><line x1="19.8" y1="26" x2="28.8" y2="16.5" stroke="#28a020" stroke-width="5.4" stroke-linecap="butt"/><line x1="19.3" y1="25" x2="28" y2="16" stroke="#90e870" stroke-width="2"/><line x1="28.6" y1="16.7" x2="30" y2="15.2" stroke="#e8e8e8" stroke-width="5.4"/><line x1="30.8" y1="14.3" x2="32.6" y2="12.4" stroke="#e84a20" stroke-width="5.6" stroke-linecap="round"/></svg>
<svg style="position:absolute;left:557px;top:549px" width="30" height="30" viewBox="-1 0 30 30"><rect x="0.5" y="0.5" width="27" height="27" fill="#fff" stroke="#9a9a9a"/><rect x="1" y="1" width="26" height="8.5" fill="#fafaff"/><rect x="19" y="1" width="8" height="8.5" fill="#e4e4fa"/><rect x="1" y="9.5" width="26" height="9" fill="url(#gor)"/><rect x="1" y="18.5" width="26" height="8.5" fill="#ececfc"/><path d="M9.5,0 V28 M18.5,0 V28 M0,9.5 H28 M0,18.5 H28" stroke="#9a9a9a" stroke-width="1"/><path d="M9.5,9 V19 M18.5,9 V19" stroke="#e08a10" stroke-width="1"/><polygon points="1.5,17 4.5,15.5 6.5,19 10,15.5 12.5,17 9.5,21.2 12.5,24.2 11.5,26 9.5,27.5 6.2,24.2 2.5,28 0,26 0.5,24 3.5,21" fill="url(#gx)" stroke="#c4120a" stroke-width="1" stroke-linejoin="round"/></svg>
<div style="position:absolute;top:608.84px;font-size:12px;line-height:12px;letter-spacing:-0.2px;white-space:nowrap;right:722px;transform-origin:100% 0;transform:scaleX(0.9);">Note :</div>
<div style="position:absolute;left:104px;top:607px;width:714px;height:78px;background:#fff;border-style:solid;border-width:1px;border-color:#a0a0a0 #fff #fff #a0a0a0"><div style="position:absolute;left:0;top:0;right:0;bottom:0;border-style:solid;border-width:1px;border-color:#696969 #e3e3e3 #e3e3e3 #696969"></div></div>
<div style="position:absolute;left:3px;top:705px;width:588px;height:1px;background:#a0a0a0;"></div>
<div style="position:absolute;left:3px;top:705px;width:1px;height:23px;background:#a0a0a0;"></div>
<div style="position:absolute;left:594px;top:705px;width:224px;height:1px;background:#a0a0a0;"></div>
<div style="position:absolute;left:594px;top:705px;width:1px;height:23px;background:#a0a0a0;"></div>
<div style="position:absolute;top:710.84px;font-size:12px;line-height:12px;letter-spacing:0.2px;white-space:nowrap;font-weight:bold;left:8.5px;transform-origin:0 0;">MIA AZIENDA SPA</div>
<div style="position:absolute;top:710.84px;font-size:12px;line-height:12px;letter-spacing:0.05px;white-space:nowrap;font-weight:bold;left:600px;transform-origin:0 0;">Intestatario licenza : READY TECNOSISTEMI</div>
<!--/BODY-->
</div>
<svg style="position:absolute;left:0;top:0" width="833" height="743"><polygon points="818,6 820,6 827,13 827,730 820,737 14,737 6,729 6,728 818,728" fill="#000"/></svg>
</body></html>
